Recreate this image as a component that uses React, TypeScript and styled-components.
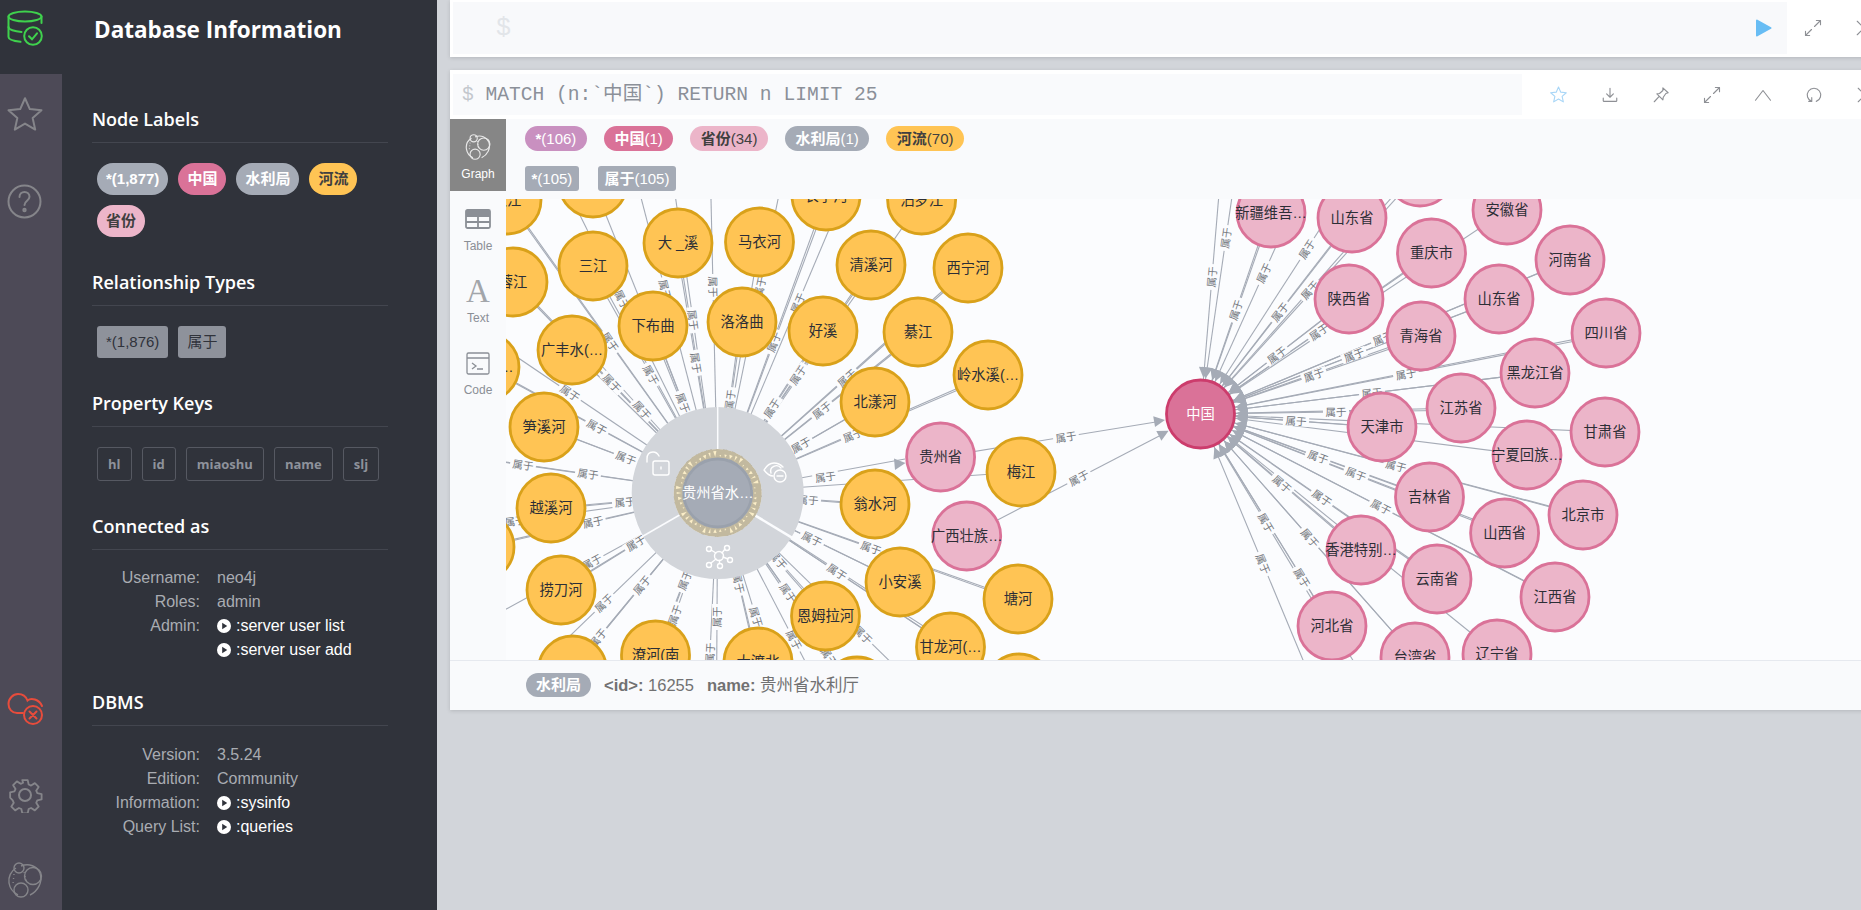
import React from 'react';
import styled, { createGlobalStyle } from 'styled-components';

const SANS = `"Liberation Sans", "Noto Sans CJK SC", sans-serif`;
const OPEN = `"Open Sans", "Noto Sans CJK SC", sans-serif`;

const Global = createGlobalStyle`
  html, body { margin: 0; padding: 0; height: 100%; overflow: hidden; background: #d2d5da; }
  #root { height: 100%; }
  * { box-sizing: border-box; }
`;

const Page = styled.div`
  display: flex;
  width: 1861px;
  height: 910px;
  overflow: hidden;
  font-family: ${SANS};
`;

/* ---------- left navigation ---------- */
const Nav = styled.nav`
  width: 62px;
  flex: none;
  display: flex;
  flex-direction: column;
  justify-content: space-between;
  background: #4d4a57;
`;
const NavGroup = styled.div`
  display: flex;
  flex-direction: column;
`;
const NavItem = styled.div<{ $h: number; $top: number; $active?: boolean }>`
  height: ${p => p.$h}px;
  padding: ${p => p.$top}px 0 0 7px;
  display: flex;
  justify-content: flex-start;
  align-items: flex-start;
  background: ${p => (p.$active ? '#30333b' : 'transparent')};
`;

/* ---------- drawer ---------- */
const Drawer = styled.aside`
  width: 375px;
  flex: none;
  background: #30333b;
  padding: 15px 49px 0 30px;
  color: #fff;
`;
const DrawerTitle = styled.h1`
  margin: 0 0 62px 2px;
  font: 700 22.5px/30px ${OPEN};
  color: #fff;
`;
const Section = styled.section`
  margin-bottom: 33px;
`;
const SectionTitle = styled.h2`
  margin: 0 0 20px;
  padding-bottom: 11px;
  border-bottom: 1px solid #43464f;
  font: 600 18px/24px ${OPEN};
  color: #fff;
`;
const ChipWrap = styled.div`
  display: flex;
  flex-wrap: wrap;
  gap: 10px;
  padding-left: 5px;
`;
const LabelChip = styled.span<{ $bg: string; $fg: string }>`
  height: 32px;
  padding: 0 9px;
  border-radius: 16px;
  background: ${p => p.$bg};
  color: ${p => p.$fg};
  font: 700 15px/32px ${SANS};
`;
const TypeChip = styled.span`
  height: 32px;
  padding: 0 9px;
  border-radius: 3px;
  background: #8e929b;
  color: #30333b;
  font: 400 15px/32px ${SANS};
`;
const KeyChip = styled.span`
  height: 34px;
  padding: 0 10px;
  border: 1px solid #565962;
  border-radius: 3px;
  color: #8e929b;
  font: 700 13px/32px ${OPEN};
`;
const InfoGrid = styled.div<{ $top: number }>`
  display: grid;
  grid-template-columns: 108px 1fr;
  column-gap: 17px;
  margin-top: ${p => p.$top}px;
  margin-bottom: -5px;
  font: 400 16px/24px ${SANS};
`;
const InfoKey = styled.div`
  text-align: right;
  color: #a9acb2;
`;
const InfoVal = styled.div`
  color: #a9acb2;
`;
const InfoLink = styled.div`
  grid-column: 2;
  color: #fff;
  display: flex;
  align-items: center;
  gap: 5px;
`;
const PlayDot = styled.svg`
  width: 14px;
  height: 14px;
  flex: none;
`;

/* ---------- main column ---------- */
const Main = styled.main`
  flex: 1;
  min-width: 0;
  padding-left: 13px;
  overflow: hidden;
  background: #d2d5da;
`;
const Frame = styled.div<{ $mb: number }>`
  width: 1440px;
  background: #fff;
  box-shadow: 0 1px 4px rgba(0, 0, 0, 0.14);
  margin-bottom: ${p => p.$mb}px;
`;
const TopBar = styled.div`
  display: flex;
  height: 57px;
  padding: 2px 0 3px 3px;
`;
const TopEditor = styled.div`
  width: 1334px;
  background: #f8f9fb;
  display: flex;
  align-items: center;
  justify-content: space-between;
  padding: 0 14px 0 43px;
  font: 400 25px/1 "Liberation Mono", monospace;
  color: #e2e5e9;
`;
const IconCell = styled.div`
  width: 51px;
  flex: none;
  display: flex;
  align-items: center;
  justify-content: center;
`;
const QueryBar = styled.div`
  display: flex;
  height: 49px;
  padding: 4px 0 4px 3px;
`;
const QueryEditor = styled.div`
  width: 1076px;
  background: #f9fafc;
  padding: 1px 0 0 9px;
  font: 400 19.6px/41px "Liberation Mono", "Noto Sans CJK SC", monospace;
  color: #8b9099;
  white-space: pre;
`;
const Dollar = styled.span`
  color: #c3c7cd;
`;
const Toolbar = styled.div`
  display: flex;
  padding-left: 11px;
  align-items: center;
`;
const ResultBody = styled.div`
  display: flex;
  height: 541px;
  background: #f9fafc;
`;
const Tabs = styled.div`
  width: 56px;
  flex: none;
  display: flex;
  flex-direction: column;
`;
const Tab = styled.div<{ $active?: boolean }>`
  height: 72px;
  display: flex;
  flex-direction: column;
  align-items: center;
  background: ${p => (p.$active ? '#868686' : 'transparent')};
  color: ${p => (p.$active ? '#fff' : '#8b8f96')};
  font: 400 12px/14px ${SANS};
`;
const TabIcon = styled.div`
  height: 48px;
  padding-top: 8px;
  display: flex;
  align-items: center;
  justify-content: center;
`;
const LetterIcon = styled.span`
  font: 400 33px/1 "Liberation Serif", serif;
  color: #a2a5aa;
`;
const ResultMain = styled.div`
  flex: 1;
  min-width: 0;
  display: flex;
  flex-direction: column;
`;
const Legend = styled.div`
  height: 80px;
  flex: none;
  padding: 7px 0 0 19px;
  display: flex;
  flex-direction: column;
  gap: 15px;
`;
const LegendRow = styled.div<{ $gap: number }>`
  display: flex;
  gap: ${p => p.$gap}px;
`;
const Pill = styled.span<{ $bg: string; $fg: string; $square?: boolean }>`
  height: 25px;
  padding: 0 ${p => (p.$square ? 6.5 : 10.5)}px;
  border-radius: ${p => (p.$square ? '3px' : '13px')};
  background: ${p => p.$bg};
  color: ${p => p.$fg};
  font: 400 15px/25px ${SANS};
  white-space: nowrap;
  b { font-weight: 700; }
`;
const GraphSvg = styled.svg`
  display: block;
  width: 1378px;
  height: 461px;
  flex: none;
  background: #fbfcfe;
`;
const Status = styled.div`
  height: 50px;
  border-top: 1px solid #e6e9ef;
  background: #f9fafc;
  display: flex;
  align-items: center;
  padding: 0 0 1px 76px;
  gap: 13px;
  font: 400 16.5px/24px ${SANS};
  color: #717172;
  b { font-weight: 700; }
`;
const StatusPill = styled.span`
  height: 24px;
  padding: 0 10px;
  border-radius: 12px;
  background: #a5abb6;
  color: #fff;
  font: 700 15px/24px ${SANS};
`;

/* ---------- icons ---------- */
type IconProps = { size?: number; color?: string; sw?: number };
const Logo = ({ size = 36, color = '#85858a', sw = 1.4 }: IconProps) => (
  <svg width={size} height={size} viewBox="0 0 36 36" fill="none" stroke={color} strokeWidth={sw}>
    <path d="M9 6 C 4 9 1 15 2 21 C 3 27 7 31 11 33" />
    <path d="M14 4 C 22 1 30 4 33 11 C 36 20 31 29 23 33" />
    <circle cx="12" cy="6" r="5" />
    <circle cx="26" cy="14" r="8.5" />
    <circle cx="14" cy="28" r="7" />
    <path d="M7 12 L6 22" strokeDasharray="1 3" />
    <path d="M17 10 L20 21" strokeDasharray="1 3" />
  </svg>
);
const DbIcon = () => (
  <svg width="36" height="36" viewBox="0 0 36 36" fill="none" stroke="#3fd14d" strokeWidth="2" strokeLinecap="round">
    <ellipse cx="18" cy="6.5" rx="16.5" ry="5" />
    <path d="M1.5 6.5V27c0 2.4 5 4 12 4.8" />
    <path d="M1.5 17c0 2.6 6 4.6 13 4.9" />
    <path d="M34.5 6.5V13" />
    <circle cx="26" cy="26" r="8.8" />
    <path d="M22 26.3l3 3 5-6" />
  </svg>
);
const StarIcon = ({ size = 36, color = '#85858a', sw = 2 }: IconProps) => (
  <svg width={size} height={size} viewBox="0 0 24 24" fill="none" stroke={color} strokeWidth={sw * 24 / size} strokeLinejoin="round">
    <path d="M12 1.5l3.2 7.2 7.8.8-5.9 5.2 1.7 7.7L12 18.4l-6.8 4 1.7-7.7L1 9.5l7.8-.8z" />
  </svg>
);
const HelpIcon = () => (
  <svg width="36" height="36" viewBox="0 0 36 36" fill="none" stroke="#85858a" strokeWidth="2" strokeLinecap="round">
    <circle cx="17.5" cy="17.5" r="16" />
    <path d="M12.5 13c0-3.2 2.300-5 5-5s5 1.800 5 4.800c0 4-5 4-5 8.200" />
    <circle cx="17.500" cy="26" r="1.200" />
  </svg>
);
const CloudXIcon = () => (
  <svg width="36" height="36" viewBox="0 0 36 36" fill="none" stroke="#e74c3c" strokeWidth="2" strokeLinecap="round">
    <path d="M16 24H10C5 24 1.500 20 1.500 15C1.500 9.500 6 5 11 5C15.500 5 19 7.500 20.500 11.500C24 8.500 32 10 35 17" />
    <circle cx="26" cy="26" r="9" />
    <path d="M22.500 22.500l7 7M29.500 22.500l-7 7" />
  </svg>
);
const GearIcon = () => (
  <svg width="36" height="36" viewBox="0 0 24 24" fill="none" stroke="#85858a" strokeWidth="1.350" strokeLinejoin="round">
    <circle cx="12" cy="12" r="4" />
    <path d="M10 1h4l.7 3.200 1.800.8 2.800-1.800 2.800 2.800-1.800 2.800.8 1.800 3.200.7v4l-3.200.7-.8 1.800 1.800 2.800-2.800 2.800-2.800-1.800-1.800.8-.7 3.200h-4l-.7-3.200-1.800-.8-2.800 1.800-2.800-2.800 1.800-2.800-.8-1.800L1 14v-4l3.200-.7.8-1.800L3.200 4.700 6 1.900l2.800 1.800 1.800-.8z" transform="translate(1.200 1.200) scale(.9)" />
  </svg>
);
const PlayCircle = () => (
  <PlayDot viewBox="0 0 14 14">
    <circle cx="7" cy="7" r="7" fill="#fff" />
    <path d="M5.200 3.800L10.200 7 5.200 10.200z" fill="#30333b" />
  </PlayDot>
);
const ToolIcon = ({ children }: { children: React.ReactNode }) => (
  <IconCell>
    <svg width="18" height="18" viewBox="0 0 24 24" fill="none" stroke="#8e9095" strokeWidth="1.500" strokeLinecap="round" strokeLinejoin="round">
      {children}
    </svg>
  </IconCell>
);
const ExpandPath = () => (
  <>
    <path d="M14 10l8-8M16.500 2H22v5.500" />
    <path d="M10 14l-8 8M2 16.500V22h5.500" />
  </>
);

/* ---------- graph data ---------- */
type N = [number, number, string];
const HUB = { x: 717.7, y: 493 };
const CHINA = { x: 1200.5, y: 414 };

const rivers: N[] = [
  [507, 200, '汶江'], [593, 183, ''], [593, 266, '三江'], [678, 243, '大 _溪'], [759.5, 242, '马衣河'],
  [826, 196, '长宁河'], [921.6, 200, '汨罗江'], [871, 265, '清溪河'], [968, 268, '西宁河'], [513, 282, '蓉江'],
  [653, 326, '下布曲'], [742, 322, '洛洛曲'], [823, 331, '好溪'], [918, 332, '綦江'], [572, 350, '广丰水(…'],
  [485, 367, '桃花溪…'], [988, 375, '岭水溪(…'], [875, 402, '北漾河'], [544, 427, '笋溪河'], [551, 508, '越溪河'],
  [480, 547, '清水河'], [561, 590, '捞刀河'], [875, 504, '翁水河'], [900, 582, '小安溪'], [825.5, 616, '恩姆拉河'],
  [1018, 599, '塘河'], [950.5, 647, '甘龙河(…'], [1021, 472, '梅江'], [655.5, 655, '潦河(南'], [758, 662, '大渡北'],
  [572.5, 670, '白水河'], [857, 691, '赤水河'], [1019, 688, '沅江'],
];
const provinces: N[] = [
  [1271, 213, '新疆维吾…'], [1352, 218, '山东省'], [1420, 172, ''], [1507, 210, '安徽省'], [1431.5, 253, '重庆市'],
  [1570, 260, '河南省'], [1499, 299, '山东省'], [1349, 299, '陕西省'], [1421, 336, '青海省'], [1606, 333, '四川省'],
  [1535, 373, '黑龙江省'], [1382, 427, '天津市'], [1461, 408, '江苏省'], [1527, 455, '宁夏回族…'], [1605, 432, '甘肃省'],
  [1429.5, 497, '吉林省'], [1504.6, 533, '山西省'], [1583, 515, '北京市'], [1361, 550, '香港特别…'], [1437, 579, '云南省'],
  [1555, 597, '江西省'], [1332, 626, '河北省'], [1415, 657, '台湾省'], [1497, 654, '辽宁省'],
];
const farPink: N[] = [[940.6, 457, '贵州省'], [966.7, 536, '广西壮族…']];

const hubLabels = [
  [665, 290], [693, 320], [696, 363], [713, 287], [760, 287], [774, 342], [798, 303], [798, 375], [847, 378],
  [610, 342], [622, 300], [651, 375], [612, 383], [570, 393], [597, 427], [626, 458], [588, 474], [523, 465],
  [625, 502], [593, 522], [515, 521], [636, 543], [592, 562], [604, 603], [642, 585], [685, 580], [675, 615],
  [717, 617], [710, 653], [738.5, 583], [756, 617], [788, 593], [794, 640], [778, 560], [837, 572], [812, 539],
  [871, 548], [863, 635], [829, 657], [598, 638], [642, 410], [683, 403], [730, 400], [772, 408], [822, 410],
  [801, 445], [853, 435], [808, 500],
];
const chinaLabels = [
  [1212, 277], [1226, 238], [1236, 310], [1264, 273], [1307, 249], [1280, 312], [1310, 290], [1319, 332], [1277, 355],
  [1354, 355], [1314, 375], [1406, 374], [1372, 393], [1383, 338], [1336, 412], [1296, 421], [1318, 457], [1356, 474],
  [1396, 466], [1282, 484], [1322, 498], [1381, 507], [1310, 538], [1266, 523], [1263, 564], [1302, 578],
];

const Line = ({ a, b }: { a: number[]; b: number[] }) => (
  <line x1={a[0]} y1={a[1]} x2={b[0]} y2={b[1]} stroke="#a5abb6" strokeWidth="1.100" />
);
const EdgeLabel = ({ p, from }: { p: number[]; from: { x: number; y: number } }) => {
  let ang = (Math.atan2(p[1] - from.y, p[0] - from.x) * 180) / Math.PI;
  if (ang > 90) ang -= 180;
  if (ang < -90) ang += 180;
  return (
    <g transform={`translate(${p[0]} ${p[1]}) rotate(${ang.toFixed(1)})`}>
      <rect x="-13" y="-5" width="26" height="10" fill="#fbfcfe" />
      <text textAnchor="middle" y="4" fontSize="10.500" fill="#73777d">属于</text>
    </g>
  );
};
const Arrow = ({ to, from, r }: { to: { x: number; y: number }; from: number[]; r: number }) => {
  const ang = (Math.atan2(from[1] - to.y, from[0] - to.x) * 180) / Math.PI;
  return (
    <polygon
      transform={`translate(${to.x} ${to.y}) rotate(${ang.toFixed(1)})`}
      points={`${r},0 ${r + 11},-5.500 ${r + 11},5.500`}
      fill="#a5abb6"
    />
  );
};
const Node = ({ n, fill, stroke, fg = '#2c2e36' }: { n: N; fill: string; stroke: string; fg?: string }) => (
  <g>
    <circle cx={n[0]} cy={n[1]} r="34" fill={fill} stroke={stroke} strokeWidth="2.800" />
    <text x={n[0]} y={n[1] + 5} textAnchor="middle" fontSize="14.300" fill={fg}>{n[2]}</text>
  </g>
);

const ringSpikes = Array.from({ length: 46 }, (_, i) => {
  const a = (i / 46) * Math.PI * 2;
  const w = 0.02 + ((i * 7) % 5) * 0.006;
  const len = 2 + ((i * 11) % 5);
  const pt = (r: number, t: number) =>
    `${(HUB.x + r * Math.cos(t)).toFixed(1)},${(HUB.y + r * Math.sin(t)).toFixed(1)}`;
  return `${pt(36, a)} ${pt(36 + len, a - w)} ${pt(36 + len, a + w)}`;
});

const polar = (r: number, deg: number) => {
  const t = (deg * Math.PI) / 180;
  return [HUB.x + r * Math.cos(t), HUB.y + r * Math.sin(t)];
};

const Graph = () => (
  <GraphSvg viewBox="506 199 1378 461" fontFamily={`"Liberation Sans", "Noto Sans CJK SC", sans-serif`}>
    {hubLabels.map((p, i) => (
      <Line key={i} a={[HUB.x, HUB.y]} b={[2 * p[0] - HUB.x, 2 * p[1] - HUB.y]} />
    ))}
    {rivers.map((n, i) => (
      <Line key={i} a={[HUB.x, HUB.y]} b={[n[0], n[1]]} />
    ))}
    <Line a={[HUB.x, HUB.y]} b={[905, 459]} />
    <Line a={[940.6, 457]} b={[1162, 421]} />
    <Line a={[966.7, 536]} b={[1165, 433]} />
    {chinaLabels.map((p, i) => (
      <Line key={i} a={[CHINA.x, CHINA.y]} b={[2 * p[0] - CHINA.x, 2 * p[1] - CHINA.y]} />
    ))}
    {provinces.map((n, i) => (
      <Line key={i} a={[CHINA.x, CHINA.y]} b={[n[0], n[1]]} />
    ))}
    {provinces.map((n, i) => (
      <Arrow key={i} to={CHINA} from={[n[0], n[1]]} r={36} />
    ))}
    {chinaLabels.map((p, i) => (
      <Arrow key={i} to={CHINA} from={p} r={36} />
    ))}
    <Arrow to={CHINA} from={[940.6, 457]} r={36} />
    <Arrow to={CHINA} from={[966.7, 536]} r={36} />
    <polygon points="905.500,463 894,458.500 895,470" fill="#a5abb6" />
    {hubLabels.map((p, i) => <EdgeLabel key={i} p={p} from={HUB} />)}
    {chinaLabels.map((p, i) => <EdgeLabel key={i} p={p} from={CHINA} />)}
    <EdgeLabel p={[825.5, 477]} from={{ x: 717.7, y: 493 }} />
    <EdgeLabel p={[1066, 437]} from={CHINA} />
    <EdgeLabel p={[1079, 478]} from={CHINA} />

    {/* radial menu */}
    <circle cx={HUB.x} cy={HUB.y} r="65" fill="none" stroke="#d2d5da" strokeWidth="42" />
    <line x1={polar(44, -90)[0]} y1={polar(44, -90)[1]} x2={polar(86, -90)[0]} y2={polar(86, -90)[1]} stroke="#fbfcfe" strokeWidth="1.500" />
    <line x1={polar(44, 31)[0]} y1={polar(44, 31)[1]} x2={polar(87, 31)[0]} y2={polar(87, 31)[1]} stroke="#fbfcfe" strokeWidth="2.500" />
    <line x1={polar(44, 150)[0]} y1={polar(44, 150)[1]} x2={polar(87, 150)[0]} y2={polar(87, 150)[1]} stroke="#fbfcfe" strokeWidth="1.500" />
    <g fill="none" stroke="#fff" strokeWidth="1.400" strokeLinecap="round" strokeLinejoin="round">
      <rect x="653" y="461" width="16" height="14" rx="2" />
      <path d="M661 467v2" />
      <path d="M647 462v-3c0-5 3-7 6-7s5 2 6 4" />
      <path d="M764 470c3-5 7-7 10-7s6 1 9 4M764 470c3 4 6 6 9 6" />
      <path d="M771 473c-2-6 6-10 10-5" />
      <circle cx="780" cy="476" r="6" />
      <path d="M777 476h6" />
      <circle cx="719" cy="556" r="4.500" />
      <circle cx="709" cy="549" r="2.500" /><circle cx="727" cy="548" r="2.500" />
      <circle cx="730" cy="560" r="2.500" /><circle cx="709" cy="565" r="2.500" />
      <circle cx="720" cy="566" r="2.500" />
      <path d="M711 550l5 3M725 549l-3 4M723 557l5 2M716 559l-5 4M719.500 560.500v3" />
    </g>
    <circle cx={HUB.x} cy={HUB.y} r="39.500" fill="none" stroke="#c2b99f" strokeWidth="9" />
    <g fill="#fbeec8">{ringSpikes.map((s, i) => <polygon key={i} points={s} />)}</g>

    {rivers.map((n, i) => <Node key={i} n={n} fill="#ffc454" stroke="#d9a11a" />)}
    {provinces.map((n, i) => <Node key={i} n={n} fill="#ecb5c9" stroke="#da7298" />)}
    {farPink.map((n, i) => <Node key={i} n={n} fill="#ecb5c9" stroke="#da7298" />)}
    <Node n={[HUB.x, HUB.y, '贵州省水…']} fill="#a5abb6" stroke="#9aa1ac" fg="#fff" />
    <Node n={[CHINA.x, CHINA.y, '中国']} fill="#da7298" stroke="#cc3c6c" fg="#fff" />
  </GraphSvg>
);

export default function App() {
  return (
    <Page>
      <Global />
      <Nav>
        <NavGroup>
          <NavItem $h={74} $top={10} $active><DbIcon /></NavItem>
          <NavItem $h={88} $top={22}><StarIcon /></NavItem>
          <NavItem $h={88} $top={22}><HelpIcon /></NavItem>
        </NavGroup>
        <NavGroup>
          <NavItem $h={88} $top={22}><CloudXIcon /></NavItem>
          <NavItem $h={88} $top={22}><GearIcon /></NavItem>
          <NavItem $h={67} $top={19}><Logo /></NavItem>
        </NavGroup>
      </Nav>

      <Drawer>
        <DrawerTitle>Database Information</DrawerTitle>
        <Section>
          <SectionTitle>Node Labels</SectionTitle>
          <ChipWrap>
            <LabelChip $bg="#a5abb6" $fg="#fff">*(1,877)</LabelChip>
            <LabelChip $bg="#da7298" $fg="#fff">中国</LabelChip>
            <LabelChip $bg="#a5abb6" $fg="#fff">水利局</LabelChip>
            <LabelChip $bg="#ffc454" $fg="#404040">河流</LabelChip>
            <LabelChip $bg="#ecb5c9" $fg="#404040">省份</LabelChip>
          </ChipWrap>
        </Section>
        <Section>
          <SectionTitle>Relationship Types</SectionTitle>
          <ChipWrap>
            <TypeChip>*(1,876)</TypeChip>
            <TypeChip>属于</TypeChip>
          </ChipWrap>
        </Section>
        <Section>
          <SectionTitle>Property Keys</SectionTitle>
          <ChipWrap>
            {['hl', 'id', 'miaoshu', 'name', 'slj'].map(k => <KeyChip key={k}>{k}</KeyChip>)}
          </ChipWrap>
        </Section>
        <Section>
          <SectionTitle>Connected as</SectionTitle>
          <InfoGrid $top={-4}>
            <InfoKey>Username:</InfoKey><InfoVal>neo4j</InfoVal>
            <InfoKey>Roles:</InfoKey><InfoVal>admin</InfoVal>
            <InfoKey>Admin:</InfoKey><InfoLink><PlayCircle />:server user list</InfoLink>
            <InfoLink><PlayCircle />:server user add</InfoLink>
          </InfoGrid>
        </Section>
        <Section>
          <SectionTitle>DBMS</SectionTitle>
          <InfoGrid $top={-3}>
            <InfoKey>Version:</InfoKey><InfoVal>3.5.24</InfoVal>
            <InfoKey>Edition:</InfoKey><InfoVal>Community</InfoVal>
            <InfoKey>Information:</InfoKey><InfoLink><PlayCircle />:sysinfo</InfoLink>
            <InfoKey>Query List:</InfoKey><InfoLink><PlayCircle />:queries</InfoLink>
          </InfoGrid>
        </Section>
      </Drawer>

      <Main>
        <Frame $mb={13}>
          <TopBar>
            <TopEditor>
              <span>$</span>
              <svg width="18" height="20" viewBox="0 0 18 20">
                <path d="M2 2.500L15.500 10 2 17.500z" fill="#68bdf4" stroke="#68bdf4" strokeWidth="2" strokeLinejoin="round" />
              </svg>
            </TopEditor>
            <ToolIcon><ExpandPath /></ToolIcon>
            <ToolIcon><path d="M3 3l18 18M21 3L3 21" /></ToolIcon>
          </TopBar>
        </Frame>
        <Frame $mb={0}>
          <QueryBar>
            <QueryEditor><Dollar>$</Dollar> MATCH (n:`中国`) RETURN n LIMIT 25</QueryEditor>
            <Toolbar>
              <IconCell><StarIcon size={17} color="#a8d6f7" sw={1.100} /></IconCell>
              <ToolIcon><path d="M12 3v12M7.500 10.500L12 15l4.500-4.500M3 16v3.500a1 1 0 001 1h16a1 1 0 001-1V16" /></ToolIcon>
              <ToolIcon><path d="M14.500 2.500l7 6.500-3 1-3.500 5-.5 3.500-8-8 3.500-.5 4.500-4zM9 14.500L3 21" /></ToolIcon>
              <ToolIcon><ExpandPath /></ToolIcon>
              <ToolIcon><path d="M2 19L12 6l10 13" /></ToolIcon>
              <ToolIcon><path d="M9 20.500a9 9 0 116 0M9 20.500v-5M9 20.500H5" /></ToolIcon>
              <ToolIcon><path d="M3 3l18 18M21 3L3 21" /></ToolIcon>
            </Toolbar>
          </QueryBar>
          <ResultBody>
            <Tabs>
              <Tab $active><TabIcon><Logo size={26} color="#e8e8e8" sw={1.600} /></TabIcon>Graph</Tab>
              <Tab>
                <TabIcon>
                  <svg width="26" height="20" viewBox="0 0 26 20" fill="none" stroke="#8b8f96" strokeWidth="1.800">
                    <rect x="1" y="1" width="24" height="18" rx="1.500" />
                    <path d="M1 7h24M1 13h24M13 7v12" />
                    <path d="M1 4h24" strokeWidth="4" />
                  </svg>
                </TabIcon>
                Table
              </Tab>
              <Tab><TabIcon><LetterIcon>A</LetterIcon></TabIcon>Text</Tab>
              <Tab>
                <TabIcon>
                  <svg width="24" height="24" viewBox="0 0 24 24" fill="none" stroke="#8b8f96" strokeWidth="1.300">
                    <rect x="1" y="2" width="22" height="21" rx="1.500" />
                    <path d="M1 7h22M6 12l4 3-4 3M11 18h6" />
                  </svg>
                </TabIcon>
                Code
              </Tab>
            </Tabs>
            <ResultMain>
              <Legend>
                <LegendRow $gap={17}>
                  <Pill $bg="#c990c0" $fg="#fff"><b>*</b>(106)</Pill>
                  <Pill $bg="#da7298" $fg="#fff"><b>中国</b>(1)</Pill>
                  <Pill $bg="#ecb5c9" $fg="#404040"><b>省份</b>(34)</Pill>
                  <Pill $bg="#a5abb6" $fg="#fff"><b>水利局</b>(1)</Pill>
                  <Pill $bg="#ffc454" $fg="#404040"><b>河流</b>(70)</Pill>
                </LegendRow>
                <LegendRow $gap={19}>
                  <Pill $square $bg="#a5abb6" $fg="#fff"><b>*</b>(105)</Pill>
                  <Pill $square $bg="#a5abb6" $fg="#fff"><b>属于</b>(105)</Pill>
                </LegendRow>
              </Legend>
              <Graph />
            </ResultMain>
          </ResultBody>
          <Status>
            <StatusPill>水利局</StatusPill>
            <span><b>&lt;id&gt;:</b> 16255</span>
            <span><b>name:</b> 贵州省水利厅</span>
          </Status>
        </Frame>
      </Main>
    </Page>
  );
}
